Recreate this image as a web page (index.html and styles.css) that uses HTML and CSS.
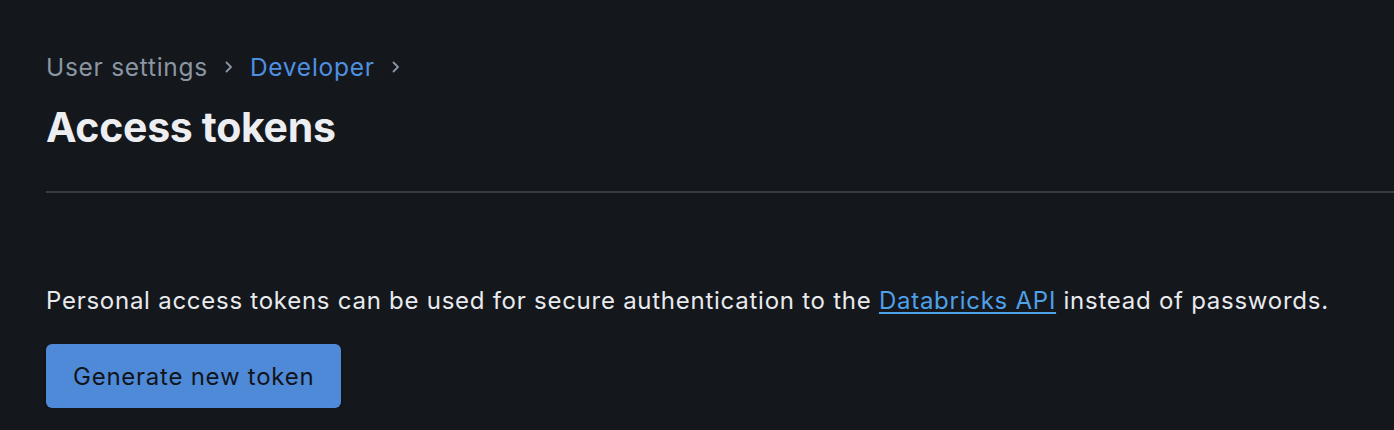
FILE: index.html
```html
<!DOCTYPE html>
<html lang="en">
<head>
    <meta charset="UTF-8">
    <meta name="viewport" content="width=device-width, initial-scale=1.0">
    <title>Access tokens</title>
    <link rel="stylesheet" href="styles.css">
</head>
<body>
    <div class="page">
        <header class="page-header">
            <nav class="breadcrumb">
                <span class="crumb">User settings</span>
                <span class="crumb-sep">
                    <svg width="10" height="14" viewBox="0 0 10 14"><path d="M2.5 2.5l4.5 4.5-4.5 4.5" fill="none" stroke="currentColor" stroke-width="1.8" stroke-linecap="round" stroke-linejoin="round"/></svg>
                </span>
                <a class="crumb crumb-link" href="#">Developer</a>
                <span class="crumb-sep">
                    <svg width="10" height="14" viewBox="0 0 10 14"><path d="M2.5 2.5l4.5 4.5-4.5 4.5" fill="none" stroke="currentColor" stroke-width="1.8" stroke-linecap="round" stroke-linejoin="round"/></svg>
                </span>
            </nav>
            <h1 class="page-title">Access tokens</h1>
        </header>

        <section class="tokens">
            <p class="tokens-intro">
                Personal access tokens can be used for secure authentication to the
                <a href="#" class="inline-link">Databricks API</a> instead of passwords.
            </p>
            <button class="btn-primary">Generate new token</button>
        </section>
    </div>
</body>
</html>
```

FILE: styles.css
```css
body {
    margin: 0;
    padding: 0;
    background: #14171c;
    color: #e8eaed;
    font-family: Inter, "Noto Sans", sans-serif;
}

.page {
    padding: 50px 0 0 46px;
}

.page-header {
    border-bottom: 2px solid #373b42;
    padding-bottom: 38px;
}

.breadcrumb {
    display: flex;
    align-items: center;
    gap: 16px;
    font-size: 24.5px;
    line-height: 34px;
    letter-spacing: 0.72px;
}

.crumb {
    color: #8a96a3;
}

.crumb-link {
    color: #4f8fe0;
    text-decoration: none;
}

.crumb-sep {
    display: flex;
    color: #8a96a3;
}

.page-title {
    margin: 17px 0 0 0;
    font-size: 41px;
    font-weight: 700;
    line-height: 52px;
    color: #eceef1;
    letter-spacing: -0.3px;
}

.tokens {
    padding-top: 92px;
}

.tokens-intro {
    margin: 0 0 27px 0;
    font-size: 24px;
    line-height: 32px;
    letter-spacing: 0.74px;
    color: #e8eaed;
}

.inline-link {
    color: #4fa0e8;
    text-decoration: underline;
    text-underline-offset: 3px;
}

.btn-primary {
    background: #4f8ad8;
    color: #11151b;
    border: none;
    border-radius: 6px;
    height: 64px;
    padding: 0 27px;
    font-family: Inter, "Noto Sans", sans-serif;
    font-size: 24px;
    letter-spacing: 0.75px;
    box-shadow: 0 2px 3px rgba(0, 0, 0, 0.5);
}
```
